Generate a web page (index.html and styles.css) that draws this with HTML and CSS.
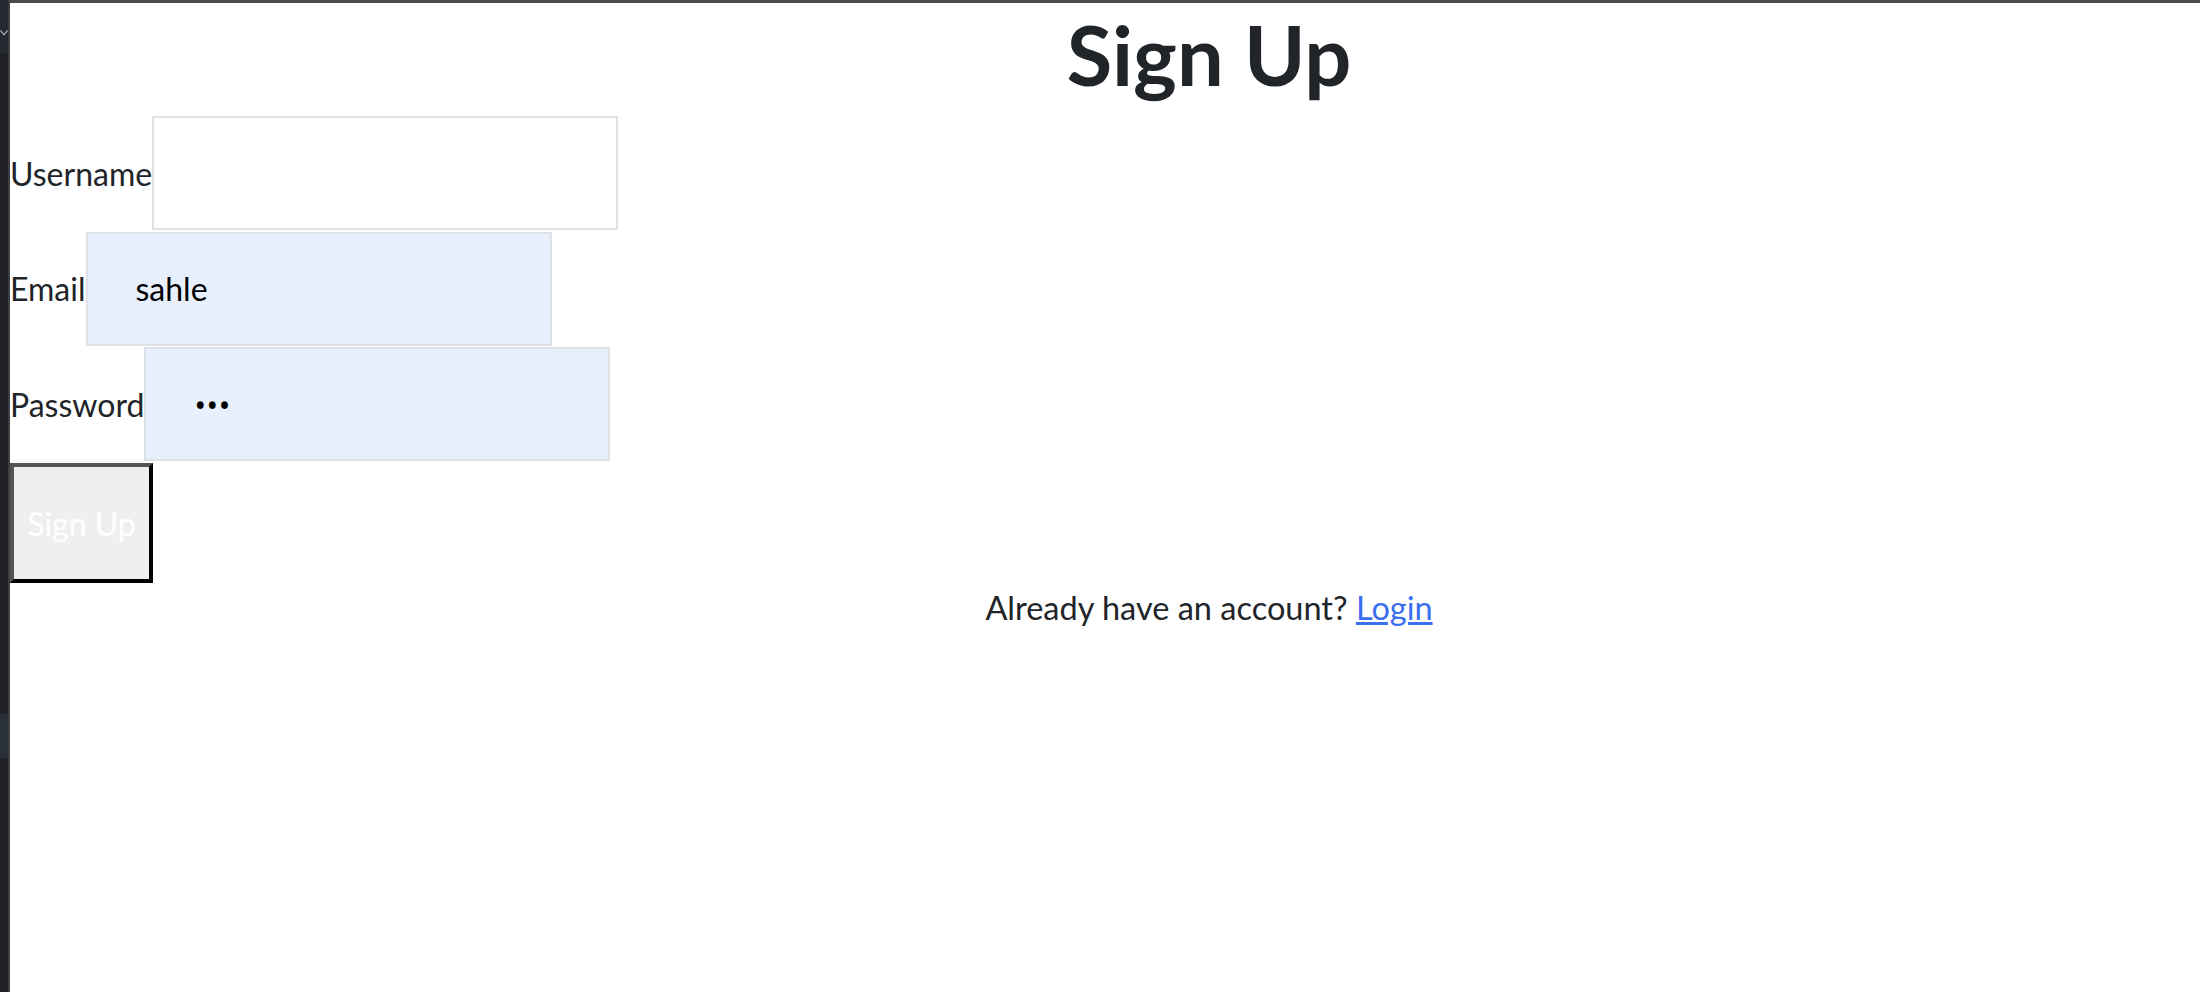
FILE: index.html
```html
<!DOCTYPE html>
<html lang="en">
<head>
<meta charset="utf-8">
<title>Sign Up</title>
<link rel="stylesheet" href="styles.css">
</head>
<body>
<div class="app">
  <aside class="side">
    <div class="side-top">
      <svg class="chev" width="9" height="8" viewBox="0 0 9 8"><polyline points="0.5,1 4.5,6 8.5,1" fill="none" stroke="#a9b3bd" stroke-width="1.3"/></svg>
    </div>
    <div class="side-gap"></div>
    <div class="side-mark"></div>
  </aside>
  <main class="page">
    <h1 class="title">Sign Up</h1>
    <form class="form">
      <div class="row"><label class="lbl" for="u">Username</label><input class="field" id="u" type="text"></div>
      <div class="row"><label class="lbl" for="e">Email</label><input class="field filled" id="e" type="text" value="sahle"></div>
      <div class="row"><label class="lbl" for="p">Password</label><input class="field filled secret" id="p" type="password" value="abc"></div>
      <button class="btn" type="button">Sign Up</button>
    </form>
    <p class="foot">Already have an account? <a class="link" href="#">Login</a></p>
  </main>
</div>
</body>
</html>
```

FILE: styles.css
```css
html, body {
  margin: 0;
  padding: 0;
  height: 100%;
  background: #ffffff;
}
body {
  font-family: Lato, "Open Sans", sans-serif;
  color: #212529;
}
.app {
  display: flex;
  height: 100vh;
}
.side {
  width: 8px;
  flex: 0 0 8px;
  background: #1f2127;
  border-right: 2px solid #3c3f44;
  display: flex;
  flex-direction: column;
}
.side-top {
  height: 53px;
  background: #262a30;
  display: flex;
  align-items: flex-start;
}
.chev {
  margin-top: 29px;
  display: block;
}
.side-gap {
  height: 661px;
}
.side-mark {
  height: 44px;
  background: #2a3039;
}
.page {
  flex: 1;
  border-top: 3px solid #4b4b4b;
  display: flex;
  flex-direction: column;
  align-items: stretch;
}
.title {
  margin: 3px 0 14px 0;
  padding-left: 208px;
  text-align: center;
  font-size: 83px;
  line-height: 96px;
  font-weight: 700;
  color: #212529;
}
.form {
  display: flex;
  flex-direction: column;
  align-items: flex-start;
  gap: 1.7px;
}
.row {
  display: flex;
  align-items: baseline;
}
.lbl {
  font-size: 32px;
  color: #212529;
}
.field {
  box-sizing: border-box;
  width: 466px;
  height: 114px;
  margin: 0;
  border: 2px solid #dee2e6;
  padding: 0 0 0 48px;
  font-family: Lato, "Open Sans", sans-serif;
  font-size: 32px;
  color: #000000;
  background: #ffffff;
  outline: none;
}
.field.filled {
  background: #e8f0fe;
}
.field.secret {
  font-family: "Open Sans", sans-serif;
  letter-spacing: 0;
}
.btn {
  box-sizing: border-box;
  width: 143px;
  height: 120px;
  margin: 0;
  padding: 0;
  background: #efefef;
  border-style: solid;
  border-width: 4px;
  border-color: #555555 #000000 #000000 #555555;
  color: #ffffff;
  font-family: Lato, "Open Sans", sans-serif;
  font-size: 32px;
}
.foot {
  margin: 1px 0 0 0;
  padding-left: 208px;
  text-align: center;
  font-size: 32.5px;
  line-height: 48px;
  color: #212529;
}
.link {
  color: #3a6ff0;
  text-decoration: underline;
}
```
